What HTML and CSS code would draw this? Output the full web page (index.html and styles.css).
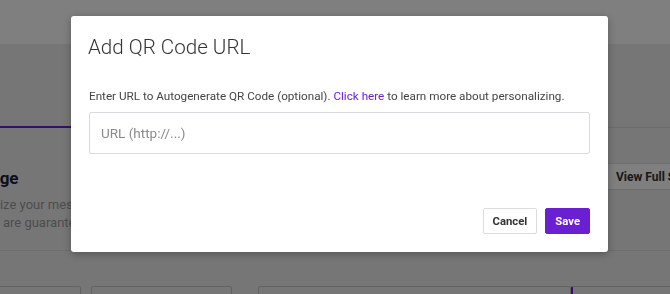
FILE: index.html
```html
<!DOCTYPE html>
<html lang="en">
<head>
    <meta charset="UTF-8">
    <meta name="viewport" content="width=device-width, initial-scale=1.0">
    <title>Add QR Code URL</title>
    <link rel="stylesheet" href="styles.css">
</head>
<body>
    <div class="page">
        <header class="topbar"></header>

        <!-- Tabs -->
        <div class="tabs">
            <div class="tab active"></div>
        </div>

        <!-- Message section -->
        <div class="content">
            <div class="intro">
                <h2>Message</h2>
                <p>Personalize your message for each recipient.</p>
                <p>Text that are guaranteed to be delivered.</p>
            </div>
            <div class="actions">
                <button class="ghost-btn">View Full Screen</button>
            </div>
        </div>

        <!-- Cards row -->
        <div class="cards">
            <div class="card small"></div>
            <div class="card medium"></div>
            <div class="card wide"></div>
            <div class="card selected"></div>
        </div>
    </div>

    <div class="overlay">
        <div class="modal">
            <h1 class="modal-title">Add QR Code URL</h1>
            <p class="modal-text">Enter URL to Autogenerate QR Code (optional). <a href="#">Click here</a> to learn more about personalizing.</p>
            <input type="text" class="url-input" placeholder="URL (http://...)">
            <div class="modal-footer">
                <button class="btn btn-cancel">Cancel</button>
                <button class="btn btn-save">Save</button>
            </div>
        </div>
    </div>
</body>
</html>
```

FILE: styles.css
```css
body {
    font-family: Roboto, "Liberation Sans", sans-serif;
    margin: 0;
    padding: 0;
    background-color: #ededed;
    overflow: hidden;
    height: 294px;
}
.page {
    width: 670px;
}
.topbar {
    height: 44px;
    background: #fff;
}
.tabs {
    height: 83px;
    border-bottom: 1px solid #d8d8d8;
    position: relative;
}
.tab.active {
    position: absolute;
    left: 0;
    bottom: -1px;
    width: 420px;
    height: 84px;
    border-bottom: 2px solid #6a1fd0;
}
.content {
    display: flex;
    justify-content: space-between;
    height: 122px;
    border-bottom: 1px solid #dcdcdc;
}
.intro {
    flex-shrink: 0;
    margin-left: -51px;
    padding-top: 40px;
}
.intro h2 {
    margin: 0 0 8px;
    font-size: 17px;
    font-weight: 700;
    color: #1c1c3c;
}
.intro p {
    margin: 0;
    font-size: 13px;
    line-height: 18px;
    color: #9a9a9a;
}
.actions {
    padding-top: 35px;
    margin-right: -60px;
}
.ghost-btn {
    width: 125px;
    height: 27px;
    padding: 0 0 0 10px;
    text-align: left;
    background: #fefefe;
    border: 1px solid #dcdcdc;
    font-family: Roboto, sans-serif;
    font-weight: 700;
    font-size: 12px;
    color: #333;
}
.cards {
    display: flex;
    margin-top: 35px;
    margin-left: -40px;
}
.card {
    flex-shrink: 0;
    height: 40px;
    border: 1px solid #c4c4c4;
    border-radius: 2px;
}
.card.small {
    width: 119px;
}
.card.medium {
    width: 139px;
    margin-left: 10px;
}
.card.wide {
    width: 311px;
    margin-left: 26px;
}
.card.selected {
    width: 200px;
    border-left: 2px solid #6a1fd0;
}
.overlay {
    position: fixed;
    top: 0;
    left: 0;
    right: 0;
    bottom: 0;
    background: rgba(0, 0, 0, 0.5);
}
.modal {
    box-sizing: border-box;
    display: flex;
    flex-direction: column;
    width: 537px;
    height: 236px;
    margin: 16px 0 0 71px;
    padding: 18px 18px 18px 17px;
    background: #fff;
    border-radius: 3px;
    box-shadow: 0 2px 8px rgba(0, 0, 0, 0.3);
}
.modal-title {
    margin: 0;
    font-size: 20.6px;
    line-height: 26px;
    font-weight: 300;
    color: #333;
}
.modal-text {
    margin: 28px 0 8px 1px;
    font-size: 11.7px;
    line-height: 16px;
    color: #444;
}
.modal-text a {
    color: #6a1fd0;
    text-decoration: none;
}
.url-input {
    box-sizing: border-box;
    width: 501px;
    height: 42px;
    margin-left: 1px;
    padding: 0 11px;
    border: 1px solid #dadae0;
    border-radius: 2px;
    font-family: Roboto, sans-serif;
    font-size: 13.5px;
    color: #333;
}
.url-input::placeholder {
    color: #8a8a8a;
}
.modal-footer {
    margin-top: auto;
    display: flex;
    justify-content: flex-end;
    gap: 8px;
}
.btn {
    height: 26px;
    padding: 0 9px;
    border-radius: 2px;
    font-family: Roboto, sans-serif;
    font-size: 11.3px;
    font-weight: 700;
    cursor: pointer;
}
.btn-cancel {
    background: #fff;
    color: #333;
    border: 1px solid #dcdcdc;
}
.btn-save {
    background: #6a1fd0;
    color: #fff;
    border: 1px solid #6a1fd0;
}
```
